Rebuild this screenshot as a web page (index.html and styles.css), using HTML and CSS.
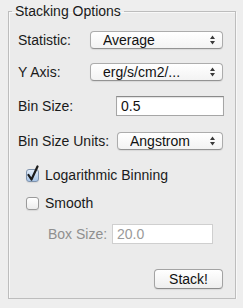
FILE: index.html
```html
<!DOCTYPE html>
<html lang="en">
<head>
  <meta charset="UTF-8">
  <meta name="viewport" content="width=device-width, initial-scale=1.0">
  <title>Stacking Options</title>
  <link rel="stylesheet" href="styles.css">
</head>
<body>
  <fieldset class="panel">
    <legend class="panel-title">Stacking Options</legend>

    <div class="row row-stat">
      <label class="field-label narrow" for="statistic">Statistic:</label>
      <span class="popup">
        <select id="statistic"><option>Average</option><option>Median</option></select>
        <svg class="arrows" width="5" height="10" viewBox="0 0 5 10"><path d="M0 4 L2.5 0.5 L5 4Z M0 6 L2.5 9.5 L5 6Z"/></svg>
      </span>
    </div>

    <div class="row row-axis">
      <label class="field-label narrow" for="yaxis">Y Axis:</label>
      <span class="popup">
        <select id="yaxis"><option>erg/s/cm2/...</option></select>
        <svg class="arrows" width="5" height="10" viewBox="0 0 5 10"><path d="M0 4 L2.5 0.5 L5 4Z M0 6 L2.5 9.5 L5 6Z"/></svg>
      </span>
    </div>

    <div class="row row-bin">
      <label class="field-label wide" for="binsize">Bin Size:</label>
      <input class="text-field" id="binsize" type="text" value="0.5">
    </div>

    <div class="row row-units">
      <label class="field-label wide" for="units">Bin Size Units:</label>
      <span class="popup">
        <select id="units"><option>Angstrom</option></select>
        <svg class="arrows" width="5" height="10" viewBox="0 0 5 10"><path d="M0 4 L2.5 0.5 L5 4Z M0 6 L2.5 9.5 L5 6Z"/></svg>
      </span>
    </div>

    <label class="row check row-log">
      <span class="box checked">
        <svg class="tick" width="12" height="17" viewBox="0 0 12 17"><path d="M1.5 10 L4.5 14.5 L10.5 1.5"/></svg>
      </span>
      Logarithmic Binning
    </label>

    <label class="row check row-smooth">
      <span class="box"></span>
      Smooth
    </label>

    <div class="row row-box">
      <label class="field-label dim" for="boxsize">Box Size:</label>
      <input class="text-field off" id="boxsize" type="text" value="20.0" disabled>
    </div>

    <div class="row row-action">
      <button class="push" type="button">Stack!</button>
    </div>
  </fieldset>
</body>
</html>
```

FILE: styles.css
```css
* {
  margin: 0;
  padding: 0;
  box-sizing: border-box;
}
body {
  background: #eeeeee;
  font-family: "Liberation Sans", Arial, sans-serif;
  font-size: 14px;
  color: #1a1a1a;
}

.panel {
  width: 228px;
  min-width: 0;
  height: 296px;
  margin: 3px 0 0 8px;
  padding: 11px 11px 9px 9px;
  border: 1px solid #bdbdbd;
  box-shadow: inset 1px 1px 0 #f8f8f8, 1px 1px 0 #f8f8f8;
  background: #ebebeb;
}
.panel-title {
  margin-left: -6px;
  padding: 0 3px;
  line-height: 16px;
  font-size: 14px;
}

.row {
  display: flex;
  align-items: center;
  height: 20px;
  min-width: 0;
}
.row-axis { margin-top: 12px; }
.row-bin { margin-top: 14px; }
.row-units { margin-top: 15px; }
.row-log { margin-top: 14px; }
.row-smooth { margin-top: 8px; }
.row-box { margin-top: 11px; }
.row-action {
  margin-top: 25px;
  justify-content: flex-end;
}

.field-label {
  flex: none;
  white-space: nowrap;
}
.field-label.narrow { width: 71px; }
.field-label.wide { width: 98px; }
.field-label.dim {
  width: 64px;
  margin-left: 30px;
  color: #8f8f8f;
}

.popup {
  position: relative;
  flex: 1;
  min-width: 0;
  margin: 0 1px;
  height: 18px;
}
.popup select {
  appearance: none;
  -webkit-appearance: none;
  display: block;
  width: 100%;
  min-width: 0;
  height: 18px;
  padding: 0 0 0 12px;
  border: 1px solid #acacac;
  border-bottom-color: #939393;
  border-radius: 4px;
  background: linear-gradient(#ffffff, #f3f3f3);
  box-shadow: 0 1px 1px rgba(0, 0, 0, 0.08);
  font: 14px "Liberation Sans", Arial, sans-serif;
  line-height: 16px;
  color: #111;
  outline: none;
}
.arrows {
  position: absolute;
  right: 8px;
  top: 4px;
  fill: #3a3a3a;
  pointer-events: none;
}

.text-field {
  flex: 1;
  width: 0;
  min-width: 0;
  height: 20px;
  padding: 0 4px;
  border: 1px solid #a6a6a6;
  border-top-color: #8a8a8a;
  box-shadow: inset 0 1px 1px rgba(0, 0, 0, 0.12);
  background: #fff;
  font: 14px "Liberation Sans", Arial, sans-serif;
  color: #111;
  outline: none;
}
.text-field.off {
  flex: none;
  width: 101px;
  border-color: #cfcfcf;
  box-shadow: none;
  color: #9a9a9a;
}

.check {
  padding-left: 8px;
  gap: 6px;
}
.box {
  position: relative;
  width: 13px;
  height: 13px;
  border: 1px solid #9a9a9a;
  border-radius: 3px;
  background: linear-gradient(#ffffff, #ececec);
  box-shadow: 0 1px 1px rgba(0, 0, 0, 0.08);
}
.box.checked {
  border-color: #7f93ad;
  background: linear-gradient(#e2ecf8, #a9c6e8);
}
.tick {
  position: absolute;
  left: 0;
  top: -5px;
  fill: none;
  stroke: #1b1b1b;
  stroke-width: 2.2;
  stroke-linecap: round;
  stroke-linejoin: round;
}

.push {
  width: 69px;
  height: 20px;
  margin-right: 1px;
  border: 1px solid #a3a3a3;
  border-bottom-color: #8c8c8c;
  border-radius: 4px;
  background: linear-gradient(#ffffff, #eeeeee);
  box-shadow: 0 1px 1px rgba(0, 0, 0, 0.08);
  font: 14px "Liberation Sans", Arial, sans-serif;
  color: #111;
}
```
